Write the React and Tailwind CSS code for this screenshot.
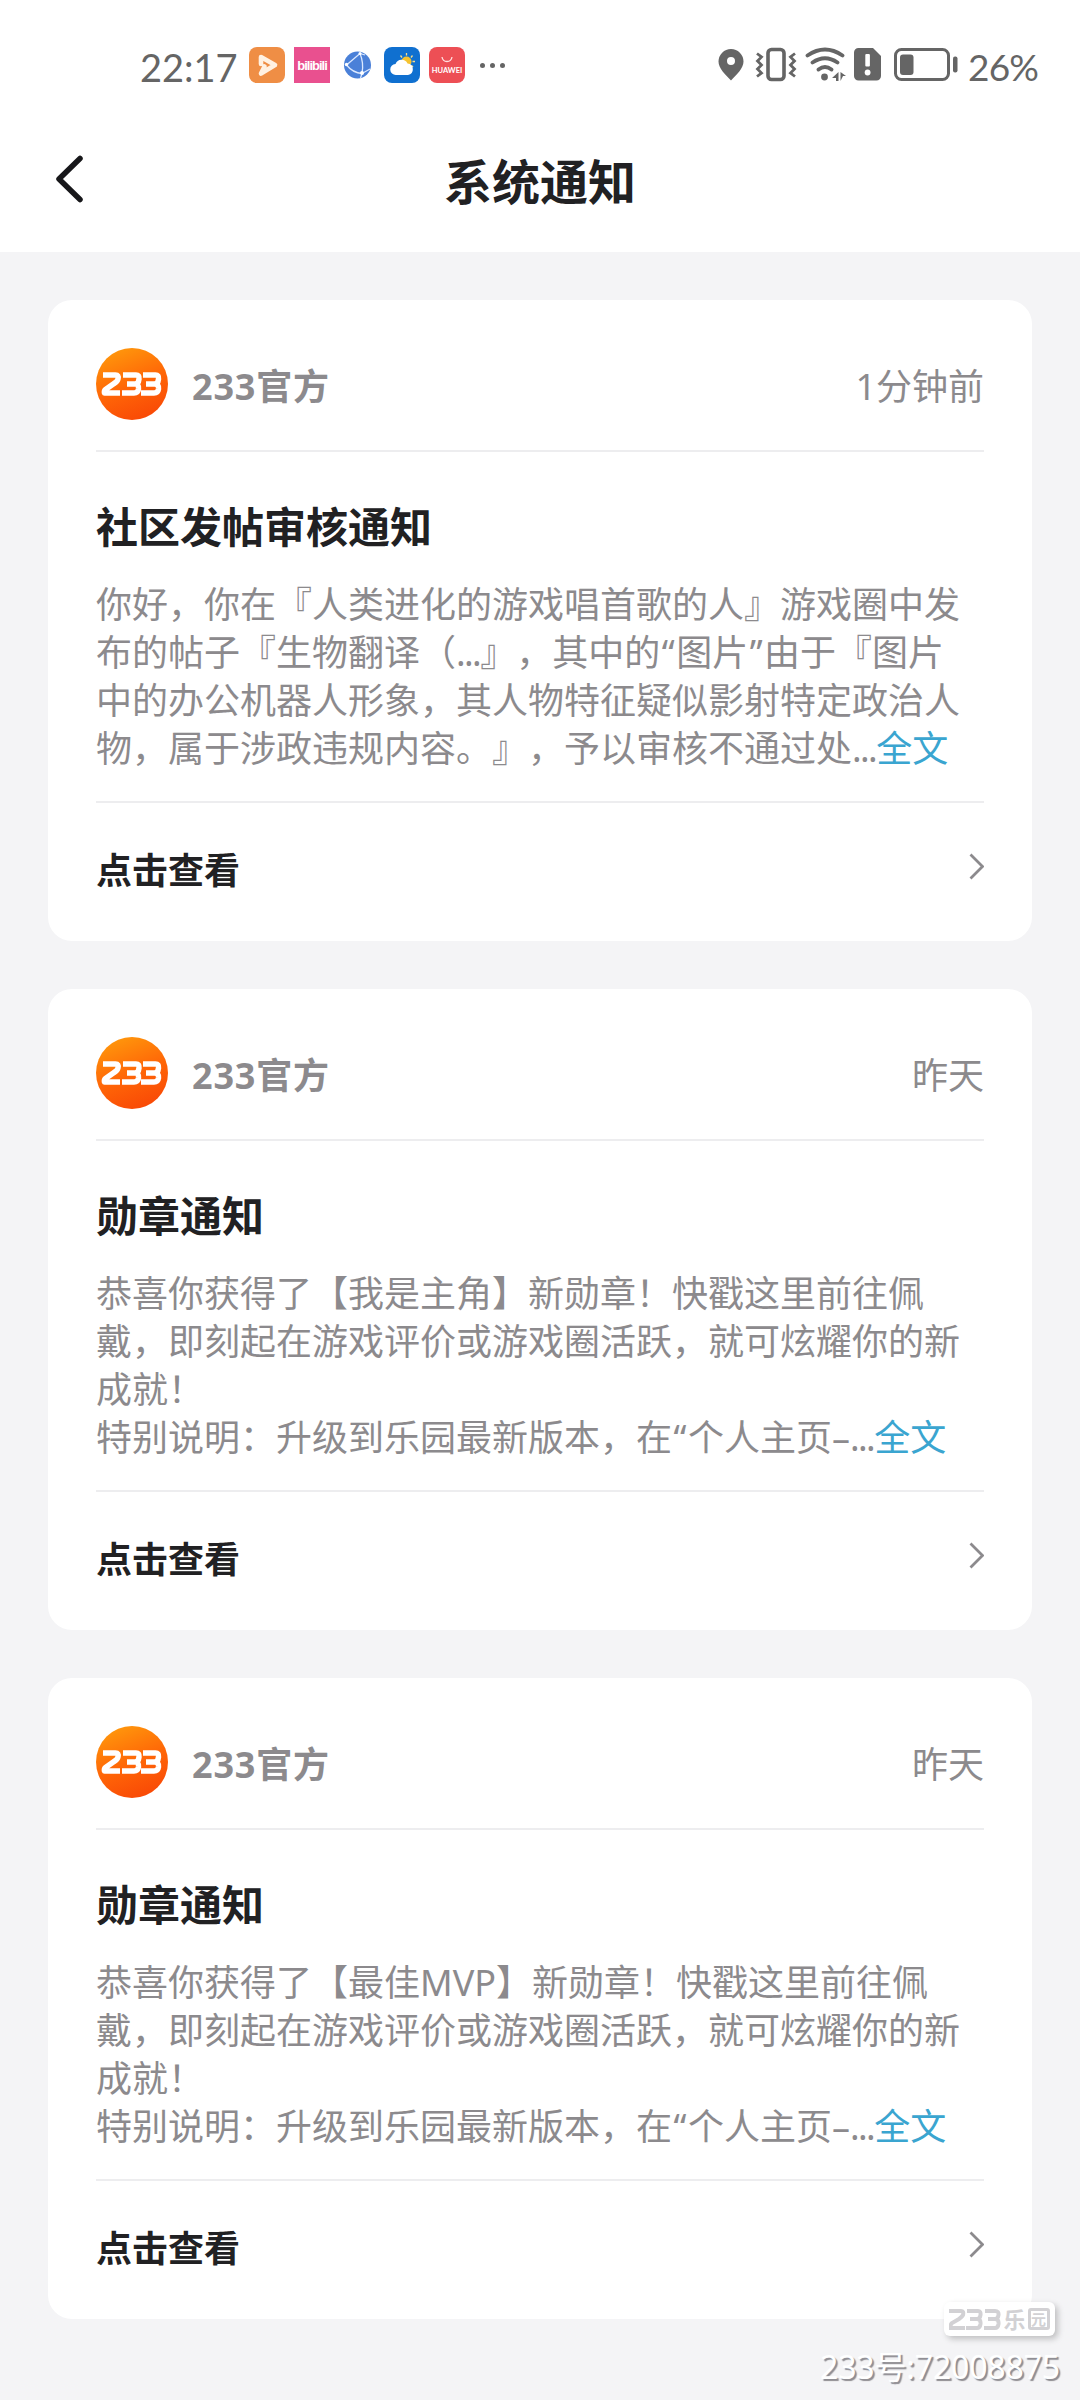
import React from 'react';

const notices = [
  {
    id: 1,
    time: '1分钟前',
    title: '社区发帖审核通知',
    lines: [
      '你好，你在『人类进化的游戏唱首歌的人』游戏圈中发',
      '布的帖子『生物翻译（...』，其中的“图片”由于『图片',
      '中的办公机器人形象，其人物特征疑似影射特定政治人',
      '物，属于涉政违规内容。』，予以审核不通过处...',
    ],
  },
  {
    id: 2,
    time: '昨天',
    title: '勋章通知',
    lines: [
      '恭喜你获得了【我是主角】新勋章！快戳这里前往佩',
      '戴，即刻起在游戏评价或游戏圈活跃，就可炫耀你的新',
      '成就！',
      '特别说明：升级到乐园最新版本，在“个人主页–...',
    ],
  },
  {
    id: 3,
    time: '昨天',
    title: '勋章通知',
    lines: [
      '恭喜你获得了【最佳MVP】新勋章！快戳这里前往佩',
      '戴，即刻起在游戏评价或游戏圈活跃，就可炫耀你的新',
      '成就！',
      '特别说明：升级到乐园最新版本，在“个人主页–...',
    ],
  },
];

// latin dots and quotes need their own spacing next to chinese glyphs
const renderLine = (line) =>
  line.split(/(\.\.\.|[“”])/).map((part, i) => {
    if (part === '...') return <span key={i} className="tracking-[-1.6px]">{part}</span>;
    if (part === '“' || part === '”') return <span key={i} className="px-[1.5px]">{part}</span>;
    return part;
  });

const AppIcons = () => (
  <div className="flex items-center gap-[9px]">
    <svg className="w-9 h-9" viewBox="0 0 36 36">
      <rect width="36" height="36" rx="8" fill="#ef8e45" />
      <path d="M12 17V10L26 18L12 26.500L15.500 19.500" fill="none" stroke="#fff1e2" strokeWidth="4.600" strokeLinejoin="round" strokeLinecap="round" />
    </svg>
    <div className="w-9 h-9 bg-[#e9508f] flex items-center justify-center">
      <span className="font-['Liberation_Sans'] text-[13px] leading-none font-bold tracking-[-1px] text-white">bilibili</span>
    </div>
    <svg className="w-9 h-9" viewBox="0 0 36 36">
      <circle cx="18.500" cy="18" r="13.500" fill="#4a80d8" />
      <path d="M7.500 18L21 6.500Q25 16 23 26.500Q14 26 7.500 18M23 26.500L31 22M21 6.500L26 8M23 26.500L21.500 31" fill="none" stroke="#dbe8ff" strokeWidth="1.300" />
      <circle cx="21" cy="6.500" r="1.500" fill="#fff" />
      <circle cx="7.500" cy="17.500" r="1.700" fill="#fff" />
      <circle cx="23" cy="26" r="2" fill="#fff" />
    </svg>
    <svg className="w-9 h-9" viewBox="0 0 36 36">
      <rect width="36" height="36" rx="8" fill="#1070d0" />
      <path d="M22.500 6V8.500M16.500 8.500L18 10.500M28.500 8.500L27 10.500M31 14.500H28.500M29 20L27.500 18.500" stroke="#f6dc8a" strokeWidth="1.300" />
      <circle cx="22.500" cy="14.500" r="5" fill="#f5c331" />
      <path d="M12 28a5.500 5.500 0 0 1-.5-11a6.500 6.500 0 0 1 12-.5a5.800 5.800 0 0 1 .5 11.500z" fill="#fff" />
    </svg>
    <div className="w-9 h-9 rounded-lg bg-[#ed4f55] flex flex-col items-center justify-center gap-[3px]">
      <svg className="w-3 h-2" viewBox="0 0 12 8">
        <path d="M1 1C2 7 10 7 11 1" fill="none" stroke="#ffe0e0" strokeWidth="1.300" />
      </svg>
      <span className="font-['Lato'] text-[7.5px] leading-none font-bold text-white">HUAWEI</span>
    </div>
  </div>
);

const StatusIcons = () => (
  <svg className="w-[242px] h-9" viewBox="0 0 242 36" fill="#656565">
    <path fillRule="evenodd" d="M13 2a12.500 12.500 0 0 1 12.500 12.500c0 7-7 13-12.500 19c-5.500-6-12.500-12-12.500-19A12.500 12.500 0 0 1 13 2zM13 10a4 4 0 1 0 0 8a4 4 0 0 0 0-8z" />
    <rect x="50" y="2.500" width="16" height="30" rx="3.500" fill="none" stroke="#656565" strokeWidth="3.600" />
    <path d="M39 6.500L43.500 10L39.500 14L43.500 18L39.500 22L43.500 26L39 29.500M77 6.500L72.500 10L76.500 14L72.500 18L76.500 22L72.500 26L77 29.500" fill="none" stroke="#656565" strokeWidth="2.800" />
    <path d="M89.500 8.500Q107 -3.500 124.500 8.500M94.500 15.500Q107 7 119.500 15.500M100.500 22.500Q107 17.500 113.500 22.500" fill="none" stroke="#656565" strokeWidth="3.800" strokeLinecap="round" />
    <circle cx="106.500" cy="30" r="3.400" />
    <path d="M120.500 25V34H118V31H114zM122.500 34V25L128 29H125z" />
    <path d="M140.500 1H155L163 9V29a4.500 4.500 0 0 1-4.500 4.500H140.500A4.500 4.500 0 0 1 136 29V5.500A4.500 4.500 0 0 1 140.500 1z" />
    <rect x="147.300" y="7" width="4.600" height="12.500" rx="1" fill="#fff" />
    <circle cx="149.600" cy="25.500" r="2.900" fill="#fff" />
    <rect x="177.500" y="2.500" width="53" height="30" rx="6" fill="none" stroke="#656565" strokeWidth="3" />
    <rect x="182" y="7.500" width="13.500" height="20.500" rx="3" />
    <rect x="235" y="9.500" width="4.500" height="16" rx="2" />
  </svg>
);

const Avatar = () => (
  <svg className="w-18 h-18" viewBox="0 0 72 72">
    <defs>
      <linearGradient id="avatar" x1="0.2" y1="0" x2="0.600" y2="1">
        <stop offset="0" stopColor="#ff9a0c" />
        <stop offset="0.550" stopColor="#ff6607" />
        <stop offset="1" stopColor="#f94a06" />
      </linearGradient>
    </defs>
    <circle cx="36" cy="36" r="36" fill="url(#avatar)" />
    <g fill="none" stroke="#fff" strokeWidth="5.500" strokeLinejoin="round">
      <path d="M7 27H19.500Q23 27 22 31Q21.500 33.500 18 35.500L9.500 41.500Q8 43 8.500 45H24" />
      <path d="M27 27H40Q43.500 27 43 31Q42.500 36 39 36H31M39 36Q43 36 42.500 41Q42 45 38 45H26" />
      <path d="M47 27H59.500Q63 27 62.500 31Q62 36 58.500 36H50M58.500 36Q63 36 62.500 41Q62 45 58 45H45" />
    </g>
  </svg>
);

const NoticeCard = ({ notice }) => (
  <section className="h-[641px] rounded-[24px] bg-white px-12 pt-12">
    <div className="flex items-center h-18">
      <Avatar />
      <span className="ml-6 pt-[6px] text-[36px] leading-[48px] font-bold tracking-[0.8px] text-[#8c8a8d]">233官方</span>
      <span className="ml-auto pt-[6px] text-[36px] leading-[48px] text-[#8c8a8d]">{notice.time}</span>
    </div>
    <div className="mt-[30px] h-[2px] bg-[#ededef]" />
    <h2 className="mt-[47px] text-[42px] leading-[56px] font-bold text-[#212123]">{notice.title}</h2>
    <p className="mt-[26px] text-[36px] leading-[48px] text-[#8c8a8d] whitespace-nowrap">
      {notice.lines.map((line, i) => (
        <span key={i} className="block">
          {renderLine(line)}
          {i === notice.lines.length - 1 && <a className="text-[#3aa5d0]">全文</a>}
        </span>
      ))}
    </p>
    <div className="mt-[28px] h-[2px] bg-[#ededef]" />
    <div className="mt-11 flex items-center justify-between">
      <span className="text-[36px] leading-[48px] font-bold text-[#212123]">点击查看</span>
      <svg className="w-4 h-7 mb-[10px]" viewBox="0 0 16 28" fill="none" stroke="#8c8a8d" strokeWidth="2.800">
        <path d="M2.500 2.500L14.500 14.500L2.500 26.500" />
      </svg>
    </div>
  </section>
);

const App = () => {
  return (
    <div
      lang="zh-CN"
      className="relative w-[1080px] h-[2400px] overflow-hidden bg-[#f4f4f6] font-['Noto_Sans','Noto_Sans_CJK_SC',sans-serif] [text-spacing-trim:space-all]"
    >
      <header className="h-[252px] bg-white">
        <div className="flex items-center h-[130px] pl-[140px] pr-[43px] font-['Lato'] text-[#656565]">
          <span className="w-[109px] pt-[3px] text-[38px] leading-none">22:17</span>
          <AppIcons />
          <div className="ml-[15px] flex gap-[5px]">
            <i className="w-[5px] h-[5px] rounded-full bg-[#656565]" />
            <i className="w-[5px] h-[5px] rounded-full bg-[#656565]" />
            <i className="w-[5px] h-[5px] rounded-full bg-[#656565]" />
          </div>
          <div className="ml-auto flex items-center gap-2">
            <StatusIcons />
            <span className="w-[69px] pt-[3px] text-[37px] leading-none tracking-[-0.8px]">26%</span>
          </div>
        </div>
        <div className="grid grid-cols-[200px_1fr_200px] items-center h-[104px]">
          <svg className="ml-[54px] mb-[6px] w-8 h-12" viewBox="0 0 32 48" fill="none" stroke="#17171a" strokeWidth="5.500" strokeLinecap="round" strokeLinejoin="round">
            <path d="M26 3.500L5 24L26 44.500" />
          </svg>
          <h1 className="text-center text-[48px] leading-[64px] font-bold text-[#212123]">系统通知</h1>
        </div>
      </header>

      <main className="flex flex-col gap-12 px-12 pt-12">
        {notices.map((notice) => (
          <NoticeCard key={notice.id} notice={notice} />
        ))}
      </main>

      {/* watermark */}
      <div className="absolute right-[20px] bottom-[10px] flex flex-col items-end">
        <div className="mr-[5px] flex items-center justify-center gap-[2px] w-[111px] h-[34px] rounded-md bg-white shadow-[3px_3px_6px_rgba(0,0,0,0.22)] text-[#d2d1d4]">
          <svg className="w-[52px] h-[21px]" viewBox="0 0 52 21" fill="none" stroke="#d2d1d4" strokeWidth="4">
            <path d="M0 2H12Q15 2 14 6Q13 8 10 10L3 14Q1 16 1 19H16M18 2H29Q32 2 31.500 6Q31 10 28 10H21M28 10Q32 10 31.500 15Q31 19 28 19H17M36 2H46Q50 2 49.500 6Q49 10 46 10H39M46 10Q50 10 49.500 15Q49 19 46 19H35" />
          </svg>
          <span className="text-[22px] leading-none font-bold">乐</span>
          <span className="w-[22px] h-[22px] rounded-[3px] border-[3px] border-[#d2d1d4] flex items-center justify-center text-[15px] leading-none font-bold">元</span>
        </div>
        <span className="mt-2 text-[32px] leading-[46px] tracking-[-0.15px] text-white [text-shadow:2px_2px_1px_#8e8c91]">233号:72008875</span>
      </div>
    </div>
  );
};

export default App;
